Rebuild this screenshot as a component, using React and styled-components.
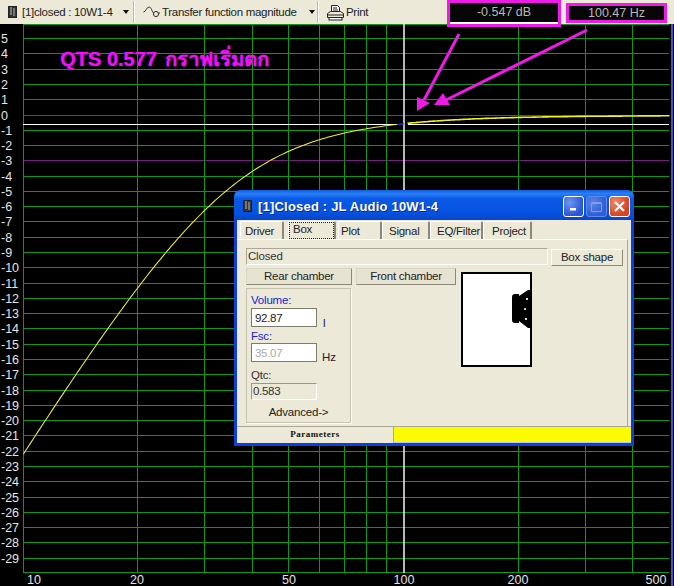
import React from 'react';
import styled, { createGlobalStyle } from 'styled-components';

const GlobalStyle = createGlobalStyle`
  html, body {
    margin: 0;
    padding: 0;
    background: #000;
  }
  body {
    font-family: "Liberation Sans", Arial, sans-serif;
    font-size: 11.5px;
    color: #111;
  }
`;

const DB_LEVELS = [5, 4, 3, 2, 1, 0, -1, -2, -3, -4, -5, -6, -7, -8, -9, -10, -11, -12, -13, -14, -15, -16, -17, -18, -19, -20, -21, -22, -23, -24, -25, -26, -27, -28, -29];
const FREQS = [20, 30, 40, 50, 60, 70, 80, 90, 200, 300, 400];
const FREQ_LABELS = [[10, 34], [20, 137], [50, 289], [100, 404], [200, 518], [500, 656]];

const xOf = (f) => 23.5 + 380.5 * Math.log10(f / 10);
const yOf = (db) => 115.5 - 15.28 * db;
const crisp = (v) => Math.round(v) - 0.5;

// closed box response, fc 35.07 Hz, Qtc 0.583
function response(f) {
  const r = 35.07 / f;
  const r2 = r * r;
  return -10 * Math.log10(1 + r2 * r2 + (1 / (0.583 * 0.583) - 2) * r2);
}

function curve(fromX, toX) {
  const pts = [];
  for (let x = fromX; x <= toX; x += 2) {
    const f = 10 * Math.pow(10, (x - 23.5) / 380.5);
    pts.push(`${x},${yOf(response(f)).toFixed(1)}`);
  }
  return pts.join(' ');
}

const Page = styled.div`
  position: relative;
  width: 674px;
  height: 586px;
  overflow: hidden;
  background: #000;
`;

const Toolbar = styled.div`
  position: relative;
  z-index: 2;
  display: flex;
  align-items: flex-start;
  height: 24px;
  padding: 0 7px 0 8px;
  box-sizing: border-box;
  background: #ece9d8;
`;

const ToolItem = styled.div`
  display: flex;
  align-items: center;
  height: 24px;
  width: ${(p) => p.$width}px;
  flex: none;
  font-size: 11.5px;
  letter-spacing: -0.3px;
  color: #222;
  white-space: nowrap;
  box-sizing: border-box;
`;

const ToolLabel = styled.span`
  margin-left: ${(p) => p.$left}px;
`;

const ToolSep = styled.div`
  flex: none;
  width: 2px;
  height: 22px;
  box-sizing: border-box;
  margin: 1px 8px 0 0;
  background: #bdb9a4;
  border-right: 1px solid #fff;
`;

const Caret = styled.span`
  margin-left: ${(p) => p.$gap}px;
  width: 0;
  height: 0;
  border-left: 3.5px solid transparent;
  border-right: 3.5px solid transparent;
  border-top: 4px solid #111;
`;

const Readout = styled.div`
  flex: none;
  width: ${(p) => p.$width}px;
  height: ${(p) => p.$height}px;
  margin-top: ${(p) => p.$top}px;
  margin-left: ${(p) => p.$left}px;
  box-sizing: border-box;
  border: 3px solid #f01ae8;
  background: #060606;
  color: #b9b9b9;
  font-size: 12.5px;
  line-height: ${(p) => p.$line}px;
  text-align: center;
`;

const ReadoutLine = styled.div`
  height: 2px;
  background: #fff;
`;

const Plot = styled.svg`
  display: block;
  width: 674px;
  height: 562px;
`;

const Grid = styled.line`
  stroke: ${(p) => p.$color || '#0a9a16'};
  stroke-width: ${(p) => p.$w || 1};
`;

const Trace = styled.polyline`
  fill: none;
  stroke: ${(p) => p.$color || '#f4f01e'};
  stroke-width: ${(p) => p.$w || 1};
`;

const AxisText = styled.text`
  fill: #e4e4e4;
  font-family: "Liberation Sans", Arial, sans-serif;
  font-size: 12.5px;
`;

const Note = styled.div`
  position: absolute;
  left: 60px;
  top: 47px;
  color: #f010f0;
  font-size: 20px;
  font-weight: 700;
  line-height: 24px;
  white-space: nowrap;
  text-shadow: 1px 0 0 #7a10c0;
`;

const NoteThai = styled.span`
  margin-left: 8px;
  font-family: "Noto Sans", "DejaVu Sans", sans-serif;
  font-size: 19.7px;
`;

const Win = styled.div`
  position: absolute;
  left: 234px;
  top: 190px;
  width: 400px;
  height: 256px;
  box-sizing: border-box;
  display: flex;
  flex-direction: column;
  border-radius: 7px 7px 0 0;
  background: #0a3fe0;
  padding: 0 3px 3px;
`;

const TitleBar = styled.div`
  flex: none;
  height: 30px;
  margin: 0 -3px;
  padding: 2px 4px 0 9px;
  box-sizing: border-box;
  display: flex;
  align-items: center;
  border-radius: 7px 7px 0 0;
  background: linear-gradient(#0b5ae8 0%, #2a80f5 12%, #0a58e6 30%, #0553e0 75%, #0a44cc 100%);
`;

const TitleText = styled.div`
  margin-left: 6px;
  flex: 1;
  color: #fff;
  font-size: 13px;
  font-weight: 700;
  letter-spacing: 0.2px;
  white-space: nowrap;
  text-shadow: 1px 1px 0 #0a2a90;
`;

const WinButton = styled.div`
  width: 21px;
  height: 21px;
  margin-left: 2px;
  box-sizing: border-box;
  display: flex;
  align-items: center;
  justify-content: center;
  border: 1px solid ${(p) => (p.$faded ? '#5f8ae8' : '#fff')};
  border-radius: 3px;
  background: ${(p) => (p.$red
    ? 'radial-gradient(circle at 30% 30%, #ee8a6a, #d8421e 70%)'
    : p.$faded
      ? 'radial-gradient(circle at 30% 30%, #5b84e6, #2f5cd8 70%)'
      : 'radial-gradient(circle at 30% 30%, #6e96f0, #2a55d6 70%)')};
`;

const Client = styled.div`
  flex: 1;
  min-height: 0;
  display: flex;
  flex-direction: column;
  background: #ece9d8;
`;

const TabRow = styled.div`
  flex: none;
  height: 18px;
  margin-top: 1px;
  padding-left: 3px;
  display: flex;
  align-items: stretch;
`;

const Tab = styled.div`
  flex: none;
  width: ${(p) => p.$width}px;
  margin-left: ${(p) => p.$left || 0}px;
  box-sizing: border-box;
  padding: 1px 0 0 ${(p) => p.$pad || 0}px;
  line-height: 16px;
  border-top: 1px solid #fff;
  border-left: 1px solid #fff;
  border-right: 2px solid #8b8878;
  border-radius: 2px 2px 0 0;
  color: #222;
  letter-spacing: -0.25px;
`;

const FocusRing = styled.div`
  height: 15px;
  margin-top: -1px;
  padding-left: 3px;
  line-height: 13px;
  border: 1px dotted #222;
`;

const Panel = styled.div`
  flex: 1;
  min-height: 0;
  padding: 8px 6px 0 9px;
  border-top: 1px solid #fff;
  border-right: 1px solid #aca899;
  margin-right: 3px;
  display: flex;
  flex-direction: column;
`;

const TopRow = styled.div`
  display: flex;
  align-items: flex-start;
  height: 20px;
`;

const ClosedField = styled.div`
  flex: none;
  width: 302px;
  height: 17px;
  box-sizing: border-box;
  padding-left: 1px;
  border: 1px solid #fff;
  border-top-color: #aca899;
  border-left-color: #aca899;
  line-height: 15px;
  color: #333;
  letter-spacing: -0.2px;
`;

const Button = styled.div`
  flex: none;
  width: ${(p) => p.$width}px;
  height: ${(p) => p.$height || 17}px;
  margin-left: ${(p) => p.$left || 0}px;
  margin-top: ${(p) => p.$top || 0}px;
  box-sizing: border-box;
  text-align: center;
  line-height: 15px;
  letter-spacing: -0.25px;
  color: #222;
  border: 1px solid ${(p) => (p.$raised ? '#fff' : '#d8d5c4')};
  border-right-color: #8b8878;
  border-bottom-color: #8b8878;
  background: ${(p) => (p.$raised ? '#ece9d8' : '#e6e3d2')};
`;

const Body = styled.div`
  display: flex;
  align-items: flex-start;
`;

const LeftColumn = styled.div`
  flex: none;
  width: 210px;
`;

const ButtonRow = styled.div`
  display: flex;
  height: 20px;
`;

const Group = styled.div`
  width: 105px;
  height: 135px;
  box-sizing: border-box;
  padding: 5px 4px 0;
  border: 1px solid #c6c3b2;
  box-shadow: 1px 1px 0 #fff;
  display: flex;
  flex-direction: column;
`;

const FieldLabel = styled.div`
  height: ${(p) => p.$height}px;
  line-height: 13px;
  letter-spacing: -0.2px;
  color: ${(p) => (p.$blue ? '#1a22d8' : '#333')};
`;

const FieldRow = styled.div`
  display: flex;
  align-items: flex-start;
  height: ${(p) => p.$height}px;
`;

const Input = styled.div`
  flex: none;
  width: 66px;
  height: 19px;
  box-sizing: border-box;
  padding-left: 3px;
  line-height: 18px;
  letter-spacing: -0.3px;
  background: #fff;
  border: 1px solid #7f7c6c;
  color: ${(p) => (p.$disabled ? '#aaa' : '#222')};
`;

const Unit = styled.div`
  margin: ${(p) => p.$top}px 0 0 ${(p) => p.$left}px;
  line-height: 13px;
  color: #222;
`;

const ReadonlyField = styled.div`
  width: 66px;
  height: 17px;
  box-sizing: border-box;
  padding-left: 1px;
  line-height: 15px;
  letter-spacing: -0.3px;
  border: 1px solid #fff;
  border-top-color: #9a9786;
  border-left-color: #9a9786;
  color: #333;
`;

const AdvancedLabel = styled.div`
  margin-top: 5px;
  text-align: center;
  line-height: 14px;
  letter-spacing: -0.2px;
  color: #222;
`;

const SpeakerBox = styled.div`
  flex: none;
  width: 71px;
  height: 95px;
  margin: 4px 0 0 5px;
  box-sizing: border-box;
  padding-top: 16px;
  border: 2px solid #000;
  background: #fff;
  display: flex;
  justify-content: flex-end;
`;

const StatusBar = styled.div`
  flex: none;
  height: 16px;
  display: flex;
  border-top: 1px solid #aca899;
`;

const StatusLabel = styled.div`
  flex: none;
  width: 156px;
  text-align: center;
  border-right: 1px solid #aca899;
  font-family: "Liberation Serif", serif;
  font-size: 9px;
  font-weight: 700;
  line-height: 15px;
  letter-spacing: 0.5px;
  color: #111;
`;

const StatusFill = styled.div`
  flex: 1;
  background: #fdfb00;
  border-bottom: 1px solid #b9c6ee;
`;

function DocIcon({ size = 12 }) {
  return (
    <svg width={size * 0.75} height={size} viewBox="0 0 9 12">
      <rect x="0.5" y="0.5" width="8" height="11" fill="#333" stroke="#222" />
      <path d="M2 2h2M5 3h2M2 4h2M5 5h2M2 6h2M5 7h2M2 8h2M5 9h2" stroke="#bbb" strokeWidth="1" />
    </svg>
  );
}

function WaveIcon() {
  return (
    <svg width="17" height="12" viewBox="0 0 17 12" style={{ marginRight: 2 }}>
      <path d="M0.5 6 C3 6 3.5 1 6 1 C8.5 1 8.5 5 10.5 7" fill="none" stroke="#333" />
      <circle cx="13" cy="8" r="2.6" fill="none" stroke="#333" />
      <path d="M15.5 7 H17" stroke="#333" />
    </svg>
  );
}

function PrintIcon() {
  return (
    <svg width="17" height="17" viewBox="0 0 17 17" style={{ marginRight: 2 }}>
      <path d="M4.5 1.5h6l2 2v5h-8z" fill="#fff" stroke="#222" />
      <path d="M6 4h4M6 6h5" stroke="#222" />
      <path d="M0.5 9.5l3-2h10l3 2v4h-16z" fill="#ece9d8" stroke="#222" />
      <rect x="2" y="13.5" width="13" height="2.5" fill="#fff" stroke="#222" />
      <path d="M1 11h15" stroke="#222" />
    </svg>
  );
}

function SpeakerIcon() {
  return (
    <svg width="20" height="38" viewBox="0 0 20 38" style={{ marginRight: -1 }}>
      <path d="M1 7 Q1 4 4 4 L8 4 L8 6 L17 0 L20 0 L20 38 L17 38 L8 31 L8 33 L4 33 Q1 33 1 30 Z" fill="#000" />
      <rect x="15" y="8" width="2" height="2" fill="#ddd" />
      <rect x="13" y="18" width="2" height="2" fill="#ccc" />
      <rect x="14" y="28" width="2" height="2" fill="#ddd" />
    </svg>
  );
}

function PlotArea() {
  return (
    <Plot viewBox="0 24 674 562">
      {DB_LEVELS.map((db) => (
        <Grid
          key={db}
          x1="23"
          x2="669"
          y1={crisp(yOf(db))}
          y2={crisp(yOf(db))}
          $color={db === 0 ? '#c81c1c' : db === -3 ? '#7c1a86' : undefined}
        />
      ))}
      <Grid x1="23" x2="669" y1="24.5" y2="24.5" />
      <Grid x1="23" x2="669" y1="572.5" y2="572.5" />
      <Grid x1="23.5" x2="23.5" y1="24" y2="573" />
      {FREQS.map((f) => (
        <Grid key={f} x1={crisp(xOf(f))} x2={crisp(xOf(f))} y1="24" y2="573" />
      ))}
      <Grid x1="672" x2="672" y1="24" y2="586" $color="#4a50c0" $w="2" />

      <Grid x1="23" x2="397" y1="124.5" y2="124.5" $color="#fff" />
      <Grid x1="408" x2="669" y1="124.5" y2="124.5" $color="#fff" />
      <Grid x1="404" x2="404" y1="24" y2="573" $color="#f4f4f4" $w="1.5" />

      <Trace points={curve(23.5, 397.5)} $w="1.05" />
      <Trace points={curve(397.5, 403.5)} $color="#1a2ae0" $w="1.5" />
      <Trace points={curve(407.5, 669.5)} $w="1.6" />

      {DB_LEVELS.map((db) => (
        <AxisText key={db} x="1" y={yOf(db) + 4}>{db}</AxisText>
      ))}
      {FREQ_LABELS.map(([f, x]) => (
        <AxisText key={f} x={x} y="584" textAnchor="middle">{f}</AxisText>
      ))}

      <path d="M459 34 L424 100" stroke="#f01ae8" strokeWidth="3" fill="none" />
      <polygon points="417,111 417,97 430,103" fill="#f01ae8" />
      <path d="M587 30 L446 100" stroke="#f01ae8" strokeWidth="3" fill="none" />
      <polygon points="434,105 450,105 443,93" fill="#f01ae8" />
    </Plot>
  );
}

function ParamsWindow() {
  return (
    <Win>
      <TitleBar>
        <DocIcon size={12} />
        <TitleText>[1]Closed : JL Audio 10W1-4</TitleText>
        <WinButton>
          <svg width="9" height="9" viewBox="0 0 9 9"><rect x="1" y="6" width="6" height="2.5" fill="#fff" /></svg>
        </WinButton>
        <WinButton $faded>
          <svg width="11" height="11" viewBox="0 0 11 11"><path d="M0.5 2.5h10v8h-10z M0.5 1.5h10" fill="none" stroke="#7fa0ea" /></svg>
        </WinButton>
        <WinButton $red>
          <svg width="11" height="11" viewBox="0 0 11 11"><path d="M1 1l9 9M10 1l-9 9" stroke="#fff" strokeWidth="2" /></svg>
        </WinButton>
      </TitleBar>
      <Client>
        <TabRow>
          <Tab $width={44} $pad={4}>Driver</Tab>
          <Tab $width={48} $left={4}><FocusRing>Box</FocusRing></Tab>
          <Tab $width={44} $left={2} $pad={2}>Plot</Tab>
          <Tab $width={48} $pad={6}>Signal</Tab>
          <Tab $width={53} $pad={6}>EQ/Filter</Tab>
          <Tab $width={49} $pad={8}>Project</Tab>
        </TabRow>
        <Panel>
          <TopRow>
            <ClosedField>Closed</ClosedField>
            <Button $width={72} $left={3} $top={1} $raised>Box shape</Button>
          </TopRow>
          <Body>
            <LeftColumn>
              <ButtonRow>
                <Button $width={106}>Rear chamber</Button>
                <Button $width={100} $left={4}>Front chamber</Button>
              </ButtonRow>
              <Group>
                <FieldLabel $height={14} $blue>Volume:</FieldLabel>
                <FieldRow $height={22}>
                  <Input>92.87</Input>
                  <Unit $left={6} $top={9}>l</Unit>
                </FieldRow>
                <FieldLabel $height={13} $blue>Fsc:</FieldLabel>
                <FieldRow $height={26}>
                  <Input $disabled>35.07</Input>
                  <Unit $left={5} $top={8}>Hz</Unit>
                </FieldRow>
                <FieldLabel $height={14}>Qtc:</FieldLabel>
                <ReadonlyField>0.583</ReadonlyField>
                <AdvancedLabel>Advanced-&gt;</AdvancedLabel>
              </Group>
            </LeftColumn>
            <SpeakerBox><SpeakerIcon /></SpeakerBox>
          </Body>
        </Panel>
        <StatusBar>
          <StatusLabel>Parameters</StatusLabel>
          <StatusFill />
        </StatusBar>
      </Client>
    </Win>
  );
}

export default function App() {
  return (
    <Page>
      <GlobalStyle />
      <Toolbar>
        <ToolItem $width={125}>
          <DocIcon size={12} />
          <ToolLabel $left={5}>[1]closed : 10W1-4</ToolLabel>
          <Caret $gap={11} />
        </ToolItem>
        <ToolSep />
        <ToolItem $width={174}>
          <WaveIcon />
          Transfer function magnitude
          <Caret $gap={12} />
        </ToolItem>
        <ToolSep />
        <ToolItem $width={50}>
          <PrintIcon />
          Print
        </ToolItem>
        <Readout $width={114} $height={27} $top={0} $left={70} $line={19}>
          -0.547 dB
          <ReadoutLine />
        </Readout>
        <Readout $width={101} $height={20} $top={3} $left={5} $line={14}>
          100.47 Hz
        </Readout>
      </Toolbar>
      <PlotArea />
      <Note>QTS 0.577<NoteThai>กราฟเริ่มตก</NoteThai></Note>
      <ParamsWindow />
    </Page>
  );
}
